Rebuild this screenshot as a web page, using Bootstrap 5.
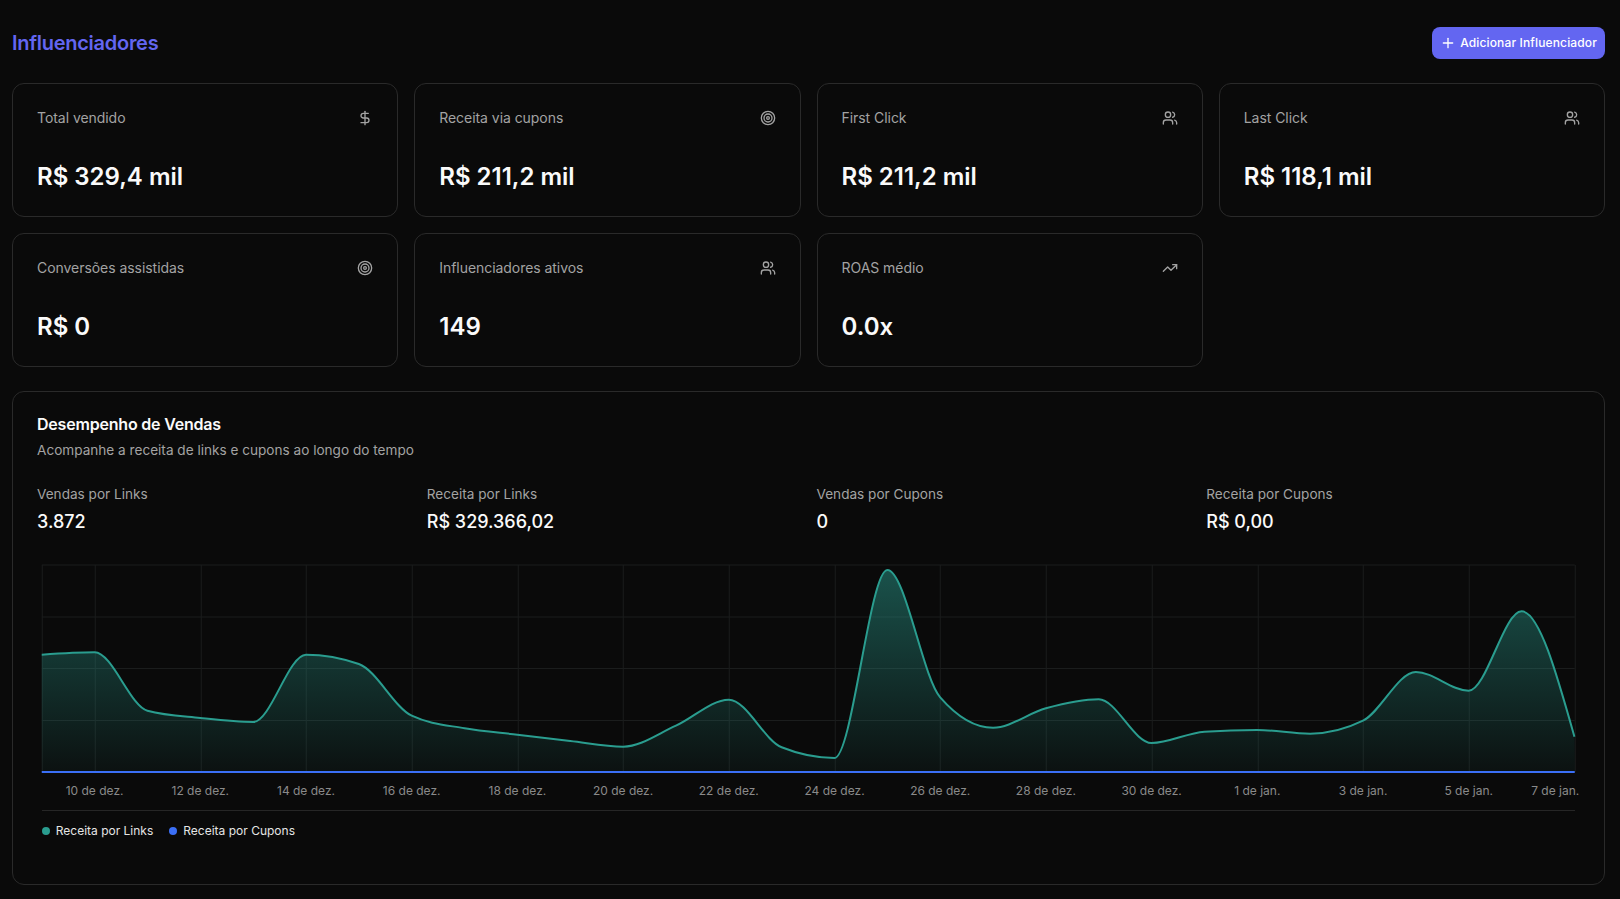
<!DOCTYPE html>
<html lang="pt-BR">
<head>
<meta charset="utf-8">
<title>Influenciadores</title>
<link href="https://cdn.jsdelivr.net/npm/bootstrap@5.3.0/dist/css/bootstrap.min.css" rel="stylesheet">
<style>
html,body{background:#0a0a0a;height:899px;overflow:hidden}
body{font-family:Inter,"Liberation Sans",sans-serif;color:#fafafa}
.page-wrap{padding:27px 15px 15px 12px}
.page-title{font-size:20px;line-height:28px;font-weight:600;color:#6366f1;margin:0;letter-spacing:-.27px}
.add-btn{height:32px;padding:0 8px;font-size:12px;font-weight:500;line-height:16px;color:#fff;background:#6366f1;border:0;border-radius:8px;gap:4px;letter-spacing:.14px}
.add-btn:hover{background:#6366f1;color:#fff}
.add-btn svg{width:16px;height:16px}
.head-row{margin-bottom:24px}
.panel{background:#0a0a0a;border:1px solid #2a2a2a;border-radius:12px;padding:24px;color:#fafafa}
.stat-label{font-size:14px;line-height:20px;color:#a3a3a3;letter-spacing:-.05px}
.stat-icon{width:16px;height:16px;color:#a3a3a3;flex:none}
.stat-value{font-size:24px;line-height:34px;font-weight:600;margin-top:32px;margin-bottom:-2px;color:#fafafa}
.lucide{fill:none;stroke:currentColor;stroke-width:2;stroke-linecap:round;stroke-linejoin:round}
.chart-panel{margin-top:24px;height:494px}
.chart-title{font-size:16px;line-height:16px;font-weight:600;margin:0;letter-spacing:-.2px}
.chart-sub{font-size:13.6px;line-height:20px;color:#a3a3a3;margin:8px 0 24px}
.metric-label{font-size:13.6px;line-height:20px;color:#a3a3a3}
.metric-value{font-size:18px;line-height:28px;font-weight:500;margin-top:4px}
.chart-svg{display:block;margin-top:19px;width:1543px;height:255px;overflow:visible}
.grid-line{stroke:#1b1d1d;stroke-width:1;fill:none}
.tick-text{font-size:12px;fill:#8a8a8a;text-anchor:middle;font-family:Inter,"Liberation Sans",sans-serif}
.legend-row{margin-left:4.75px;width:1533px;border-top:1px solid #262626;padding-top:12px;gap:16px;font-size:12px;line-height:16px;color:#e5e5e5}
.legend-dot{width:8px;height:8px;border-radius:50%;margin-right:6px;flex:none}
.dot-teal{background:#2a9d8f}
.dot-blue{background:#3b6ff6}
</style>
</head>
<body>
<main class="page-wrap">
  <div class="d-flex justify-content-between align-items-center head-row">
    <h1 class="page-title">Influenciadores</h1>
    <button type="button" class="btn add-btn d-inline-flex align-items-center">
      <svg class="lucide" viewBox="0 0 24 24"><path d="M5 12h14"/><path d="M12 5v14"/></svg>
      Adicionar Influenciador
    </button>
  </div>

  <div class="row g-3">
    <div class="col-3"><div class="panel">
      <div class="d-flex justify-content-between align-items-center"><span class="stat-label">Total vendido</span>
        <svg class="lucide stat-icon" viewBox="0 0 24 24"><line x1="12" x2="12" y1="2" y2="22"/><path d="M17 5H9.5a3.5 3.5 0 0 0 0 7h5a3.5 3.5 0 0 1 0 7H6"/></svg></div>
      <div class="stat-value">R$ 329,4 mil</div>
    </div></div>
    <div class="col-3"><div class="panel">
      <div class="d-flex justify-content-between align-items-center"><span class="stat-label">Receita via cupons</span>
        <svg class="lucide stat-icon" viewBox="0 0 24 24"><circle cx="12" cy="12" r="10"/><circle cx="12" cy="12" r="6"/><circle cx="12" cy="12" r="2"/></svg></div>
      <div class="stat-value">R$ 211,2 mil</div>
    </div></div>
    <div class="col-3"><div class="panel">
      <div class="d-flex justify-content-between align-items-center"><span class="stat-label">First Click</span>
        <svg class="lucide stat-icon" viewBox="0 0 24 24"><path d="M16 21v-2a4 4 0 0 0-4-4H6a4 4 0 0 0-4 4v2"/><circle cx="9" cy="7" r="4"/><path d="M22 21v-2a4 4 0 0 0-3-3.87"/><path d="M16 3.13a4 4 0 0 1 0 7.75"/></svg></div>
      <div class="stat-value">R$ 211,2 mil</div>
    </div></div>
    <div class="col-3"><div class="panel">
      <div class="d-flex justify-content-between align-items-center"><span class="stat-label">Last Click</span>
        <svg class="lucide stat-icon" viewBox="0 0 24 24"><path d="M16 21v-2a4 4 0 0 0-4-4H6a4 4 0 0 0-4 4v2"/><circle cx="9" cy="7" r="4"/><path d="M22 21v-2a4 4 0 0 0-3-3.87"/><path d="M16 3.13a4 4 0 0 1 0 7.75"/></svg></div>
      <div class="stat-value">R$ 118,1 mil</div>
    </div></div>
    <div class="col-3"><div class="panel">
      <div class="d-flex justify-content-between align-items-center"><span class="stat-label">Conversões assistidas</span>
        <svg class="lucide stat-icon" viewBox="0 0 24 24"><circle cx="12" cy="12" r="10"/><circle cx="12" cy="12" r="6"/><circle cx="12" cy="12" r="2"/></svg></div>
      <div class="stat-value">R$ 0</div>
    </div></div>
    <div class="col-3"><div class="panel">
      <div class="d-flex justify-content-between align-items-center"><span class="stat-label">Influenciadores ativos</span>
        <svg class="lucide stat-icon" viewBox="0 0 24 24"><path d="M16 21v-2a4 4 0 0 0-4-4H6a4 4 0 0 0-4 4v2"/><circle cx="9" cy="7" r="4"/><path d="M22 21v-2a4 4 0 0 0-3-3.87"/><path d="M16 3.13a4 4 0 0 1 0 7.75"/></svg></div>
      <div class="stat-value">149</div>
    </div></div>
    <div class="col-3"><div class="panel">
      <div class="d-flex justify-content-between align-items-center"><span class="stat-label">ROAS médio</span>
        <svg class="lucide stat-icon" viewBox="0 0 24 24"><polyline points="22 7 13.5 15.5 8.5 10.5 2 17"/><polyline points="16 7 22 7 22 13"/></svg></div>
      <div class="stat-value">0.0x</div>
    </div></div>
  </div>

  <section class="panel chart-panel">
    <h2 class="chart-title">Desempenho de Vendas</h2>
    <p class="chart-sub">Acompanhe a receita de links e cupons ao longo do tempo</p>
    <div class="row g-3">
      <div class="col-3"><div class="metric-label">Vendas por Links</div><div class="metric-value">3.872</div></div>
      <div class="col-3"><div class="metric-label">Receita por Links</div><div class="metric-value">R$ 329.366,02</div></div>
      <div class="col-3"><div class="metric-label">Vendas por Cupons</div><div class="metric-value">0</div></div>
      <div class="col-3"><div class="metric-label">Receita por Cupons</div><div class="metric-value">R$ 0,00</div></div>
    </div>
    <svg class="chart-svg" viewBox="37.25 555 1543 255">
      <defs>
        <linearGradient id="areaFill" x1="0" y1="565" x2="0" y2="772" gradientUnits="userSpaceOnUse">
          <stop offset="0" stop-color="#2a9d8f" stop-opacity=".5"/>
          <stop offset="1" stop-color="#2a9d8f" stop-opacity=".05"/>
        </linearGradient>
      </defs>
      <g class="grid-line" id="gridLines"></g>
      <path id="areaPath" fill="url(#areaFill)" stroke="none"/>
      <path id="linePath" fill="none" stroke="#2a9d8f" stroke-width="2"/>
      <line x1="42" x2="1575" y1="772" y2="772" stroke="#3b6ff6" stroke-width="2"/>
      <g class="tick-text">
        <text x="94.85" y="795">10 de dez.</text>
        <text x="200.55" y="795">12 de dez.</text>
        <text x="306.25" y="795">14 de dez.</text>
        <text x="411.95" y="795">16 de dez.</text>
        <text x="517.65" y="795">18 de dez.</text>
        <text x="623.35" y="795">20 de dez.</text>
        <text x="729.05" y="795">22 de dez.</text>
        <text x="834.75" y="795">24 de dez.</text>
        <text x="940.45" y="795">26 de dez.</text>
        <text x="1046.15" y="795">28 de dez.</text>
        <text x="1151.85" y="795">30 de dez.</text>
        <text x="1257.55" y="795">1 de jan.</text>
        <text x="1363.25" y="795">3 de jan.</text>
        <text x="1468.95" y="795">5 de jan.</text>
        <text x="1555.5" y="795">7 de jan.</text>
      </g>
    </svg>
    <div class="legend-row d-flex">
      <span class="d-inline-flex align-items-center"><span class="legend-dot dot-teal"></span>Receita por Links</span>
      <span class="d-inline-flex align-items-center"><span class="legend-dot dot-blue"></span>Receita por Cupons</span>
    </div>
  </section>
</main>
<script src="https://cdn.jsdelivr.net/npm/bootstrap@5.3.0/dist/js/bootstrap.bundle.min.js"></script>
<script>
(function(){
  var ys=[654.7,652.3,710.7,718,722,654.7,664,715.7,728.3,734.7,741,746.7,725.7,699.7,747.3,758,570,697.3,727.7,708.3,699.3,743,731.7,730,733.7,720.7,672,690.7,611.3,736.7];
  var x0=42,dx=52.85,n=ys.length;
  var xs=ys.map(function(_,i){return x0+i*dx;});
  function sign(v){return v<0?-1:1;}
  var m=[];
  for(var i=1;i<n-1;i++){
    var s0=(ys[i]-ys[i-1])/dx,s1=(ys[i+1]-ys[i])/dx,p=(s0+s1)/2;
    m[i]=(sign(s0)+sign(s1))*Math.min(Math.abs(s0),Math.abs(s1),0.5*Math.abs(p))||0;
  }
  m[0]=(3*(ys[1]-ys[0])/dx-m[1])/2;
  m[n-1]=(3*(ys[n-1]-ys[n-2])/dx-m[n-2])/2;
  var d='M'+xs[0]+','+ys[0];
  for(i=0;i<n-1;i++){
    var h=dx/3;
    d+='C'+(xs[i]+h).toFixed(2)+','+(ys[i]+h*m[i]).toFixed(2)+' '+(xs[i+1]-h).toFixed(2)+','+(ys[i+1]-h*m[i+1]).toFixed(2)+' '+xs[i+1].toFixed(2)+','+ys[i+1];
  }
  document.getElementById('linePath').setAttribute('d',d);
  document.getElementById('areaPath').setAttribute('d',d+'L1575,772L42,772Z');
  var g=document.getElementById('gridLines'),ns='http://www.w3.org/2000/svg';
  function ln(a,b,c,e){var l=document.createElementNS(ns,'line');l.setAttribute('x1',a);l.setAttribute('y1',b);l.setAttribute('x2',c);l.setAttribute('y2',e);g.appendChild(l);}
  [565,617,668.5,720.5].forEach(function(y){ln(42,y,1575,y);});
  var v=[42,1575];
  for(i=0;i<14;i++)v.push(94.85+i*105.7);
  v.forEach(function(x){x=Math.round(x)+.5;ln(x,565,x,772);});
})();
</script>
</body>
</html>
